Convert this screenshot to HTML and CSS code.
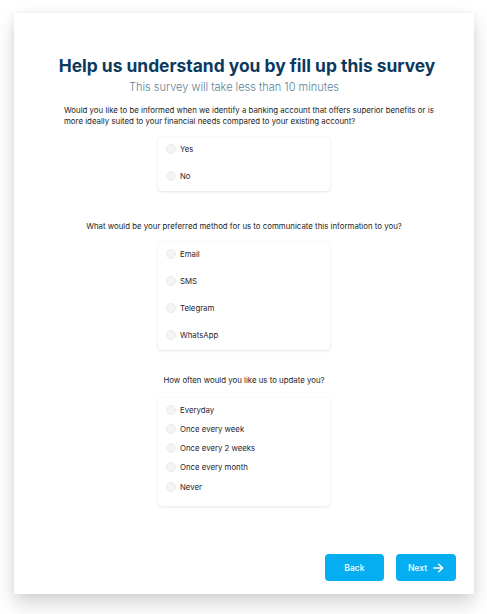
FILE: index.html
```html
<!DOCTYPE html>
<html>
<head>
<meta charset="utf-8">
<link rel="stylesheet" href="styles.css">
</head>
<body>
<div class="card">
  <h1 class="title">Help us understand you by fill up this survey</h1>
  <p class="subtitle">This survey will take less than 10 minutes</p>

  <p class="question q1">Would you like to be informed when we identify a banking account that offers superior benefits or is more ideally suited to your financial needs compared to your existing account?</p>
  <div class="options wide">
    <label class="option"><span class="radio"></span>Yes</label>
    <label class="option"><span class="radio"></span>No</label>
  </div>

  <p class="question q2">What would be your preferred method for us to communicate this information to you?</p>
  <div class="options wide">
    <label class="option"><span class="radio"></span>Email</label>
    <label class="option"><span class="radio"></span>SMS</label>
    <label class="option"><span class="radio"></span>Telegram</label>
    <label class="option"><span class="radio"></span>WhatsApp</label>
  </div>

  <p class="question q3">How often would you like us to update you?</p>
  <div class="options tight">
    <label class="option"><span class="radio"></span>Everyday</label>
    <label class="option"><span class="radio"></span>Once every week</label>
    <label class="option"><span class="radio"></span>Once every 2 weeks</label>
    <label class="option"><span class="radio"></span>Once every month</label>
    <label class="option"><span class="radio"></span>Never</label>
  </div>

  <div class="actions">
    <button class="btn back">Back</button>
    <button class="btn next">Next
      <svg class="arrow" width="11" height="10" viewBox="0 0 11 10"><path d="M1 5H9.5M5.8 1.2L9.6 5L5.8 8.8" fill="none" stroke="#fff" stroke-width="1.6" stroke-linecap="round" stroke-linejoin="round"/></svg>
    </button>
  </div>
</div>
</body>
</html>
```
FILE: styles.css
```css
* { box-sizing: border-box; }
html, body { margin: 0; padding: 0; background: #ffffff; }
body {
  font-family: Inter, "Noto Sans", "Liberation Sans", sans-serif;
  width: 487px;
  height: 614px;
  overflow: hidden;
}
.card {
  margin: 13px 0 0 14px;
  width: 460px;
  height: 581px;
  background: #fff;
  box-shadow: 0 0 8px rgba(0,0,0,0.06), 0 10px 18px rgba(0,0,0,0.16);
  display: flex;
  flex-direction: column;
  align-items: center;
  padding: 41px 18px 13px 18px;
}
.title {
  margin: 0 0 0 6px;
  font-size: 17.4px;
  line-height: 24px;
  font-weight: 700;
  color: #0b3a5e;
}
.subtitle {
  margin: 1px 20px 0 0;
  font-size: 11px;
  line-height: 16px;
  font-weight: 300;
  color: #5d7f98;
}
.question {
  margin: 0;
  font-size: 7.85px;
  line-height: 11px;
  color: #1c1c24;
  font-weight: 400;
}
.q1 { margin-top: 9.5px; width: 372px; align-self: flex-start; margin-left: 32px; text-align: left; }
.q2 { margin-top: 30px; text-align: center; }
.q3 { margin-top: 25px; text-align: center; }
.options {
  width: 172px;
  margin-top: 10px;
  background: #fff;
  border-radius: 4px;
  box-shadow: 0 0 2px rgba(0,0,0,0.04), 0 1px 3px rgba(0,0,0,0.1);
  display: flex;
  flex-direction: column;
  padding: 5px 8px 8px 8px;
}
.options.wide { gap: 13px; }
.options.tight { gap: 5.3px; padding-bottom: 12px; margin-top: 12px; }
.option {
  display: flex;
  align-items: center;
  height: 14px;
  font-size: 7.8px;
  color: #1f2430;
}
.radio {
  width: 10px;
  height: 10px;
  border-radius: 50%;
  background: #f3f4f6;
  border: 1px solid #eaebee;
  margin-right: 4px;
  flex: none;
}
.actions {
  margin-top: auto;
  align-self: flex-end;
  display: flex;
  gap: 12px;
}
.btn {
  height: 27px;
  border: none;
  border-radius: 4px;
  background: #04aef0;
  color: #fff;
  font-family: Inter, "Noto Sans", sans-serif;
  font-size: 8.6px;
  font-weight: 500;
  display: flex;
  align-items: center;
  justify-content: center;
  padding: 0;
}
.back { width: 59px; }
.next { width: 60px; gap: 6px; }
.arrow { display: block; }
```
